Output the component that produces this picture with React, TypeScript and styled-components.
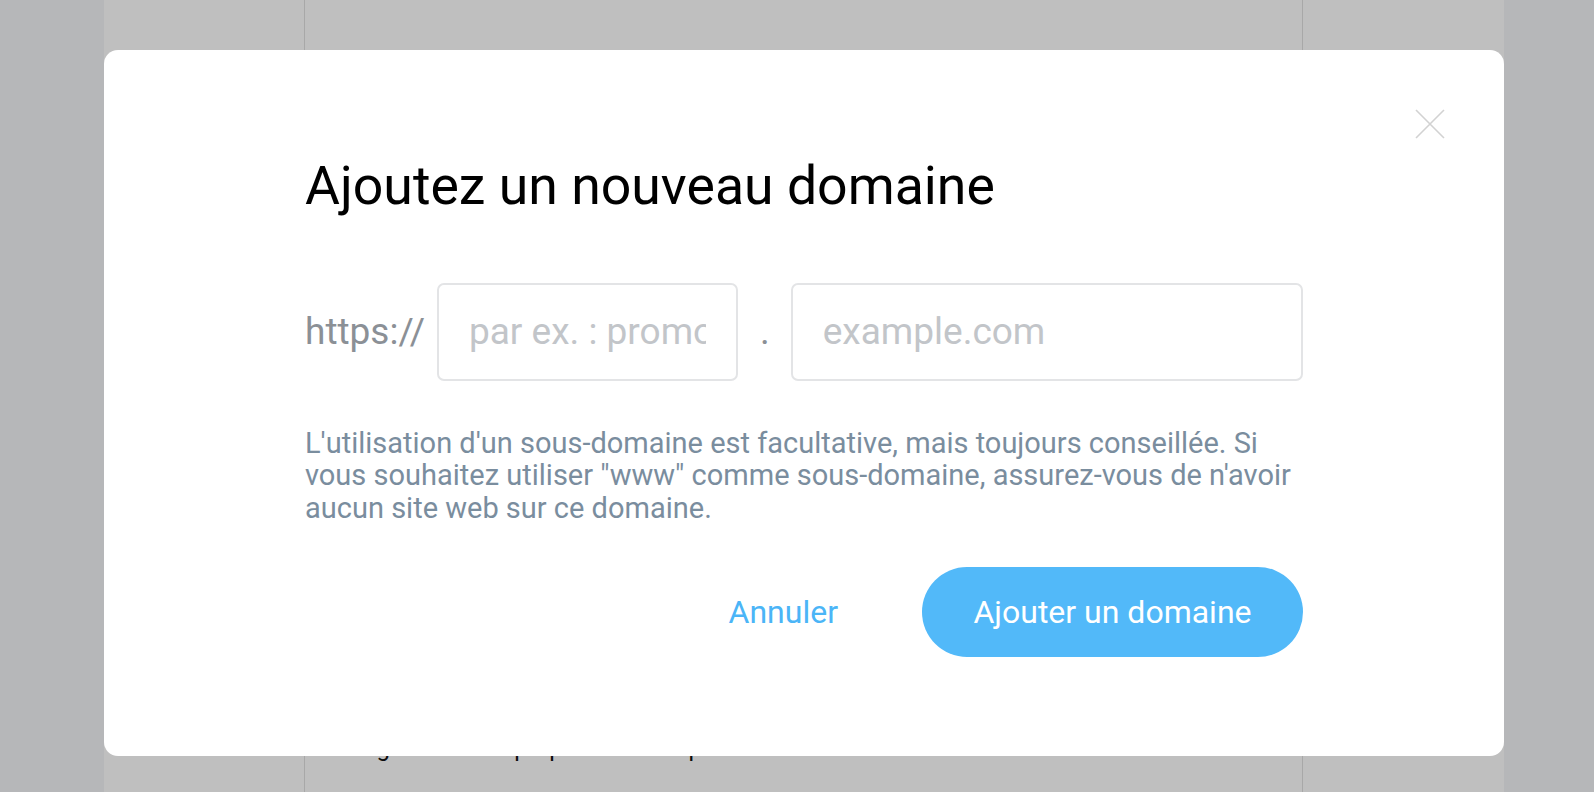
import React from "react";
import styled, { createGlobalStyle } from "styled-components";

const GlobalStyle = createGlobalStyle`
  html, body {
    margin: 0;
    padding: 0;
    background: #f3f4f7;
    font-family: Roboto, "Liberation Sans", Arial, sans-serif;
    overflow: hidden;
  }
  * { box-sizing: border-box; }
`;

const Page = styled.div`
  width: 1400px;
  height: 792px;
  margin: 0 auto 0 104px;
  background: #ffffff;
  display: flex;
  justify-content: flex-start;
  padding-left: 200px;
`;

const Column = styled.div`
  width: 999px;
  height: 100%;
  border-left: 1px solid #e0e0e0;
  border-right: 1px solid #e0e0e0;
  display: flex;
  flex-direction: column;
  justify-content: flex-start;
  padding: 0 0 0 24px;
`;

const BackText = styled.p`
  margin: 0;
  padding-top: 733px;
  font-size: 24px;
  line-height: 30px;
  color: #111;
`;

const Overlay = styled.div`
  position: fixed;
  inset: 0;
  background: rgba(0, 0, 0, 0.25);
`;

const Modal = styled.div`
  position: fixed;
  top: 50px;
  left: 104px;
  width: 1400px;
  height: 706px;
  background: #ffffff;
  border-radius: 14px;
  padding: 104px 201px 99px 201px;
  display: flex;
  flex-direction: column;
`;

const CloseButton = styled.button`
  position: absolute;
  top: 57px;
  right: 57px;
  width: 34px;
  height: 34px;
  padding: 0;
  border: none;
  background: transparent;
  cursor: pointer;
  display: flex;
  align-items: center;
  justify-content: center;
`;

const Title = styled.h2`
  margin: 0;
  font-size: 53.6px;
  line-height: 64.8px;
  font-weight: 400;
  color: #000000;
  letter-spacing: 0;
`;

const DomainRow = styled.div`
  margin-top: 64px;
  display: flex;
  align-items: center;
  height: 98px;
`;

const Prefix = styled.span`
  font-size: 37px;
  color: #8b9096;
  margin-right: 12px;
  white-space: nowrap;
`;

const Dot = styled.span`
  font-size: 37px;
  color: #8b9096;
  margin: 0 21px 0 22px;
`;

const Field = styled.input<{ $grow?: boolean }>`
  height: 98px;
  width: ${(p) => (p.$grow ? "auto" : "301px")};
  flex: ${(p) => (p.$grow ? "1 1 0" : "0 0 301px")};
  min-width: 0;
  border: 2px solid #e3e4e6;
  border-radius: 7px;
  padding: 0 30px;
  font-family: Roboto, "Liberation Sans", Arial, sans-serif;
  font-size: 37px;
  color: #333;
  background: #fff;
  outline: none;
  &::placeholder {
    color: #c2c5c9;
  }
`;

const Help = styled.p`
  margin: 46px 0 0 0;
  max-width: 990px;
  font-size: 29px;
  line-height: 32.5px;
  color: #7a8d9e;
`;

const Actions = styled.div`
  margin-top: 43px;
  display: flex;
  justify-content: flex-end;
  align-items: center;
`;

const TextButton = styled.button`
  border: none;
  background: transparent;
  font-family: Roboto, "Liberation Sans", Arial, sans-serif;
  font-size: 32px;
  color: #4bb5f7;
  padding: 0;
  margin-right: 84px;
  cursor: pointer;
`;

const PrimaryButton = styled.button`
  height: 90px;
  width: 381px;
  border: none;
  border-radius: 45px;
  background: #52b9f9;
  color: #ffffff;
  font-family: Roboto, "Liberation Sans", Arial, sans-serif;
  font-size: 32px;
  cursor: pointer;
`;

export default function App() {
  return (
    <>
      <GlobalStyle />
      <Page>
        <Column>
          <BackText>Enregistrez votre propre domaine personnalisé ici</BackText>
        </Column>
      </Page>
      <Overlay />
      <Modal>
        <CloseButton aria-label="Fermer">
          <svg width="32" height="32" viewBox="0 0 32 32">
            <path d="M2 2 L30 30 M30 2 L2 30" stroke="#d2d2d2" strokeWidth="1.6" fill="none" />
          </svg>
        </CloseButton>
        <Title>Ajoutez un nouveau domaine</Title>
        <DomainRow>
          <Prefix>https://</Prefix>
          <Field placeholder="par ex. : promo" />
          <Dot>.</Dot>
          <Field $grow placeholder="example.com" />
        </DomainRow>
        <Help>
          L'utilisation d'un sous-domaine est facultative, mais toujours conseillée. Si vous
          souhaitez utiliser "www" comme sous-domaine, assurez-vous de n'avoir aucun site web
          sur ce domaine.
        </Help>
        <Actions>
          <TextButton>Annuler</TextButton>
          <PrimaryButton>Ajouter un domaine</PrimaryButton>
        </Actions>
      </Modal>
    </>
  );
}
